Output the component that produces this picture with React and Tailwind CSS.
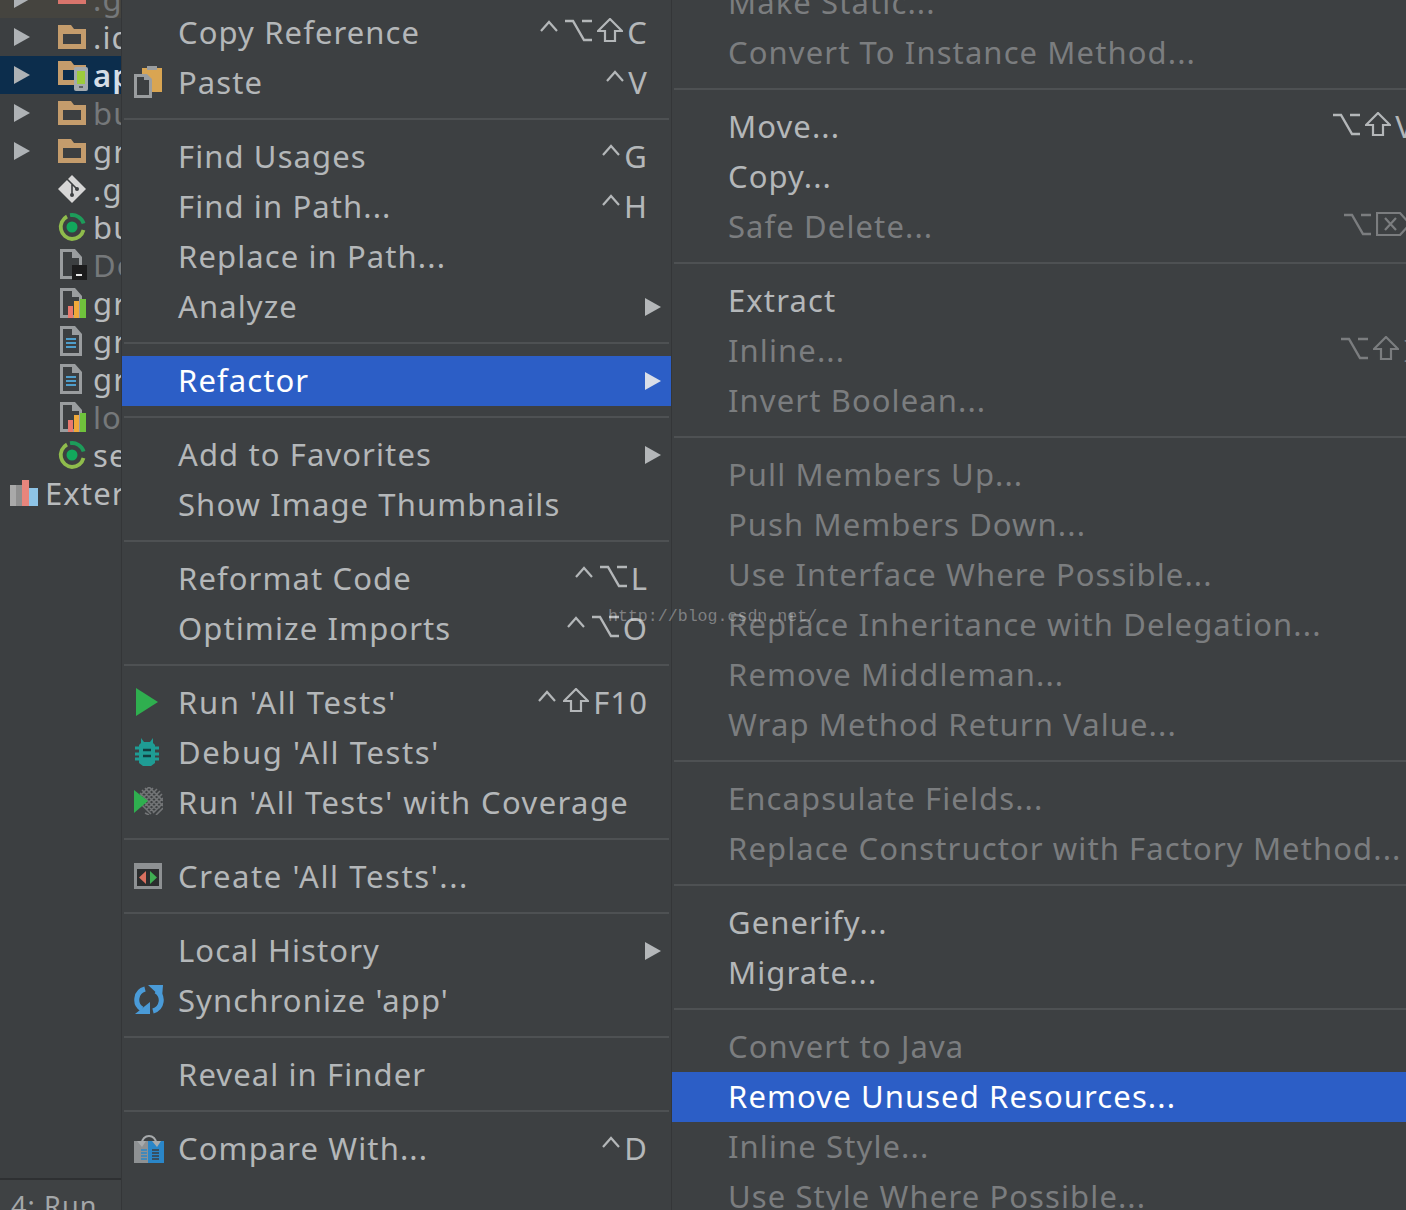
const Tri = ({ className = '' }) => (
  <svg width="16" height="18" viewBox="0 0 16 18" className={className}>
    <path d="M0 0L16 9L0 18z" fill="currentColor" />
  </svg>
);

const Folder = () => (
  <svg width="28" height="24" viewBox="0 0 28 24">
    <path fillRule="evenodd" fill="#c49c6c" d="M0 0h13l3 4h12v20H0zM5 9v10h18V9z" />
  </svg>
);

const AppFolder = () => (
  <svg width="30" height="30" viewBox="0 0 30 30" className="mt-[2px]">
    <path fillRule="evenodd" fill="#c49c6c" d="M0 0h13l3 4h12v20H0zM5 9v10h18V9z" />
    <rect x="16" y="6" width="14" height="24" rx="2" fill="#a3a9ad" />
    <rect x="19" y="10" width="8" height="13" fill="#9ccb3c" />
    <rect x="21" y="25" width="4" height="2" fill="#5b6064" />
  </svg>
);

const GitIcon = () => (
  <svg width="28" height="28" viewBox="0 0 28 28">
    <path d="M14 0L28 14L14 28L0 14z" fill="#d6d6d6" />
    <path d="M9 4l5 5v11M14 9l5 5" stroke="#3c3f41" strokeWidth="1.6" fill="none" />
    <circle cx="14" cy="20" r="2" fill="#3c3f41" />
    <circle cx="19" cy="14" r="2" fill="#3c3f41" />
  </svg>
);

const GradleIcon = () => (
  <svg width="28" height="28" viewBox="0 0 28 28" fill="none">
    <path d="M9 3.500A12 12 0 0 0 14 26A12 12 0 0 0 25.500 17" stroke="#8fbc4c" strokeWidth="3.800" />
    <path d="M12 2.200A12 12 0 0 1 25.600 10.500" stroke="#1d9c5a" strokeWidth="3.800" />
    <circle cx="14" cy="14" r="5.500" fill="#12a85c" />
  </svg>
);

const DocOutline = () => (
  <path fillRule="evenodd" fill="#9a9d9f" d="M0 0h15l7 8v22H0zM3 3v24h16V9h-7V3z" />
);

const DockerFile = () => (
  <svg width="28" height="32" viewBox="0 0 28 32" className="ml-[2px]">
    <DocOutline />
    <rect x="12" y="16" width="15" height="15" fill="#1c1c1d" />
    <rect x="16" y="25" width="6" height="2" fill="#e8e8e8" />
  </svg>
);

const ChartFile = () => (
  <svg width="26" height="30" viewBox="0 0 26 30" className="ml-[2px]">
    <DocOutline />
    <rect x="8" y="18" width="5" height="12" fill="#e8786e" />
    <rect x="14" y="13" width="5" height="17" fill="#f0a93a" />
    <rect x="20" y="11" width="6" height="19" fill="#6fc23c" />
  </svg>
);

const TextFile = () => (
  <svg width="22" height="30" viewBox="0 0 22 30" className="ml-[2px]">
    <DocOutline />
    <path d="M6 13h10M6 17h10M6 21h10" stroke="#4f9ecb" strokeWidth="2" />
  </svg>
);

const LibIcon = () => (
  <svg width="28" height="26" viewBox="0 0 28 26" className="shrink-0">
    <rect x="0" y="5" width="6" height="21" fill="#a9a9a9" />
    <rect x="6" y="5" width="6" height="21" fill="#8f8f8f" />
    <rect x="12" y="0" width="7" height="26" fill="#e8857c" />
    <rect x="19" y="8" width="9" height="18" fill="#8ec4e6" />
  </svg>
);

const PasteIcon = () => (
  <svg width="28" height="32" viewBox="0 0 28 32">
    <rect x="8" y="2" width="20" height="24" fill="#d9a552" />
    <rect x="13" y="0" width="10" height="4" fill="#9a9d9f" />
    <path fillRule="evenodd" fill="#9a9d9f" d="M0 8h13l5 5v19H0zM3 11v18h12V14h-5v-3z" />
    <path fill="#3c3f41" d="M3 11h7v3h5v15H3z" />
  </svg>
);

const PlayIcon = () => (
  <svg width="22" height="28" viewBox="0 0 22 28" className="ml-[2px]">
    <path d="M0 0L22 14L0 28z" fill="#2faf4f" />
  </svg>
);

const BugIcon = () => (
  <svg width="24" height="28" viewBox="0 0 24 28" className="ml-[1px]">
    <path d="M6 0l3 4h6l3-4v5l2 2v18l-4 3H8l-4-3V7l2-2z" fill="#1f9c94" />
    <path d="M0 10h24M0 16h24M0 21h24" stroke="#1f9c94" strokeWidth="3" />
    <path d="M8 12h8M8 18h8" stroke="#123f40" strokeWidth="2.400" />
  </svg>
);

const CoverageIcon = () => (
  <svg width="29" height="28" viewBox="0 0 29 28" className="mt-[-2px]">
    <path
      d="M6 9L15 0M6 14L19 1M8 17L23 2M11 19L26 4M13 22L28 7M16 24L29 11M19 26L29 16M22 28L29 21M15 0L29 14M11 1L29 19M8 3L26 21M6 6L23 23M6 11L20 25M8 18L17 27M11 26L15 28"
      stroke="#737577"
      strokeWidth="1.600"
    />
    <path d="M0 3L14 14L0 26z" fill="#2faf4f" />
  </svg>
);

const CreateIcon = () => (
  <svg width="28" height="26" viewBox="0 0 28 26">
    <rect x="0" y="0" width="28" height="26" fill="#8e9193" />
    <rect x="3" y="6" width="22" height="17" fill="#2b2d2e" />
    <path d="M12 8v13L5 14.500z" fill="#d9705f" />
    <path d="M16 8v13l7-6.500z" fill="#3fae52" />
  </svg>
);

const SyncIcon = () => (
  <svg width="30" height="30" viewBox="0 0 30 30" fill="none">
    <path d="M8 24A11 11 0 0 1 11 4" stroke="#4a9bd8" strokeWidth="5" />
    <path d="M22 6A11 11 0 0 1 19 26" stroke="#4a9bd8" strokeWidth="5" />
    <path d="M14 0h15l-1 13z" fill="#4a9bd8" />
    <path d="M1 29h15V17z" fill="#4a9bd8" />
  </svg>
);

const CompareIcon = () => (
  <svg width="30" height="30" viewBox="0 0 30 30">
    <rect x="0" y="8" width="14" height="22" fill="#8e9193" />
    <rect x="14" y="8" width="16" height="22" fill="#2a86c8" />
    <path d="M7 17h6M7 20h6M7 23h6M7 26h6" stroke="#2a86c8" strokeWidth="1.500" />
    <path d="M18 17h7M18 20h7M18 23h7M18 26h7" stroke="#3c3f41" strokeWidth="1.500" />
    <path d="M8 10A7 7 0 0 1 22 10" stroke="#a7aaac" strokeWidth="2" fill="none" />
    <path d="M3 8h9l-4 6zM18 8h9l-4 6z" fill="#a7aaac" />
  </svg>
);

// mac modifier keys, drawn because no installed font has these shapes
const KeyCtrl = () => (
  <svg width="18" height="24" viewBox="0 0 18 24" fill="none" stroke="currentColor" strokeWidth="2.200">
    <path d="M1 13L9 4L17 13" />
  </svg>
);

const KeyOpt = () => (
  <svg width="27" height="24" viewBox="0 0 27 24" fill="none" stroke="currentColor" strokeWidth="2.400">
    <path d="M0 3H8L19 22H27M17 3H27" />
  </svg>
);

const KeyShift = () => (
  <svg width="26" height="24" viewBox="0 0 26 24" fill="none" stroke="currentColor" strokeWidth="2.200">
    <path d="M13 1L25 13H18V23H8V13H1z" />
  </svg>
);

const KeyDel = () => (
  <svg width="35" height="24" viewBox="0 0 35 24" fill="none" stroke="currentColor" strokeWidth="2.200">
    <path d="M1 1H24L34 12L24 23H1zM9 6L20 18M20 6L9 18" />
  </svg>
);

const keyIcons = { c: KeyCtrl, o: KeyOpt, s: KeyShift, d: KeyDel };

const Keys = ({ mods = '', letter = '' }) => (
  <span className="mr-[13px] flex items-center gap-[5px] whitespace-nowrap">
    {mods.split('').map((m, i) => {
      const Icon = keyIcons[m];
      return (
        <span key={i} className={`mt-[-4px] flex ${m === 'c' && mods.length > 1 ? 'mr-[2px]' : ''}`}>
          <Icon />
        </span>
      );
    })}
    <span className="ml-[-1px]">{letter}</span>
  </span>
);

const treeRows = [
  { name: '.gitignore', icon: null, arrow: true, dim: true, top: true },
  { name: '.idea', icon: <Folder />, arrow: true },
  { name: 'app', icon: <AppFolder />, arrow: true, selected: true },
  { name: 'build', icon: <Folder />, arrow: true, dim: true },
  { name: 'gradle', icon: <Folder />, arrow: true },
  { name: '.gitignore', icon: <GitIcon /> },
  { name: 'build.gradle', icon: <GradleIcon /> },
  { name: 'Dockerfile', icon: <DockerFile />, dim: true },
  { name: 'gradle.properties', icon: <ChartFile /> },
  { name: 'gradlew', icon: <TextFile /> },
  { name: 'gradlew.bat', icon: <TextFile /> },
  { name: 'local.properties', icon: <ChartFile />, dim: true },
  { name: 'settings.gradle', icon: <GradleIcon /> },
];

const menuOne = [
  [
    { label: 'Copy Reference', mods: 'cos', letter: 'C' },
    { label: 'Paste', mods: 'c', letter: 'V', icon: <PasteIcon /> },
  ],
  [
    { label: 'Find Usages', mods: 'c', letter: 'G' },
    { label: 'Find in Path...', mods: 'c', letter: 'H' },
    { label: 'Replace in Path...' },
    { label: 'Analyze', sub: true },
  ],
  [{ label: 'Refactor', sub: true, active: true }],
  [
    { label: 'Add to Favorites', sub: true },
    { label: 'Show Image Thumbnails' },
  ],
  [
    { label: 'Reformat Code', mods: 'co', letter: 'L' },
    { label: 'Optimize Imports', mods: 'co', letter: 'O' },
  ],
  [
    { label: "Run 'All Tests'", mods: 'cs', letter: 'F10', icon: <PlayIcon />, track: 'tracking-[1.6px]' },
    { label: "Debug 'All Tests'", icon: <BugIcon />, track: 'tracking-[1.6px]' },
    { label: "Run 'All Tests' with Coverage", icon: <CoverageIcon />, track: 'tracking-[1.4px]' },
  ],
  [{ label: "Create 'All Tests'...", icon: <CreateIcon />, track: 'tracking-[1.6px]' }],
  [
    { label: 'Local History', sub: true },
    { label: "Synchronize 'app'", icon: <SyncIcon /> },
  ],
  [{ label: 'Reveal in Finder' }],
  [{ label: 'Compare With...', mods: 'c', letter: 'D', icon: <CompareIcon /> }],
];

const menuTwo = [
  [
    { label: 'Make Static...', off: true },
    { label: 'Convert To Instance Method...', off: true },
  ],
  [
    { label: 'Move...', mods: 'os', letter: 'V' },
    { label: 'Copy...' },
    { label: 'Safe Delete...', mods: 'od', off: true },
  ],
  [
    { label: 'Extract' },
    { label: 'Inline...', mods: 'os', letter: 'I', off: true },
    { label: 'Invert Boolean...', off: true },
  ],
  [
    { label: 'Pull Members Up...', off: true },
    { label: 'Push Members Down...', off: true },
    { label: 'Use Interface Where Possible...', off: true },
    { label: 'Replace Inheritance with Delegation...', off: true },
    { label: 'Remove Middleman...', off: true },
    { label: 'Wrap Method Return Value...', off: true },
  ],
  [
    { label: 'Encapsulate Fields...', off: true },
    { label: 'Replace Constructor with Factory Method...', off: true },
  ],
  [{ label: 'Generify...' }, { label: 'Migrate...' }],
  [
    { label: 'Convert to Java', off: true },
    { label: 'Remove Unused Resources...', active: true },
    { label: 'Inline Style...', off: true },
    { label: 'Use Style Where Possible...', off: true },
  ],
];

const TreeRow = ({ row }) => (
  <div className={`relative flex h-[38px] shrink-0 items-center ${row.selected ? 'bg-[#0c2d4c]' : ''} ${row.top ? 'bg-[#45443f]' : ''}`}>
    <div className="w-[58px] shrink-0 pl-[14px] text-[#aeb2b5]">{row.arrow && <Tri className="block" />}</div>
    <div className="flex w-[35px] shrink-0 items-center">
      {row.top ? <div className="mt-[-18px] h-[28px] w-[28px] border-[4px] border-[#d9756c]" /> : row.icon}
    </div>
    <span className={`whitespace-nowrap ${row.selected ? 'font-semibold text-[#d5dde6]' : row.dim ? 'text-[#75787a]' : 'text-[#b8bbbd]'}`}>
      {row.name}
    </span>
  </div>
);

const MenuRow = ({ item }) => {
  const tone = item.active ? 'bg-[#2c5ec6] text-white' : item.off ? 'text-[#7b7d7f]' : 'text-[#b4b7b9]';
  return (
    <div className={`flex h-[50px] shrink-0 items-center pb-[2px] pl-[9px] pr-[10px] ${tone}`}>
      <div className="flex w-[47px] shrink-0 items-center pl-[3px]">{item.icon}</div>
      <span className={`grow whitespace-nowrap ${item.track || ''}`}>{item.label}</span>
      {item.mods && <Keys mods={item.mods} letter={item.letter} />}
      {item.sub && <Tri className={`mt-[2px] ${item.active ? 'text-[#d9dee8]' : 'text-[#b4b7b9]'}`} />}
    </div>
  );
};

const Menu = ({ groups, className }) => (
  <div className={`flex shrink-0 flex-col border-l border-[#343638] bg-[#3d4042] ${className}`}>
    {groups.map((group, i) => (
      <div key={i} className="flex shrink-0 flex-col">
        {i > 0 && <div className="mx-[2px] mb-[12px] mt-[10px] h-[2px] shrink-0 bg-[#4e5153]" />}
        {group.map((item) => (
          <MenuRow key={item.label} item={item} />
        ))}
      </div>
    ))}
  </div>
);

export default function App() {
  return (
    <div className="relative flex h-[1210px] w-[1406px] overflow-hidden bg-[#3c3f41] font-['Noto_Sans',sans-serif] text-[31px] tracking-[1.1px]">
      <div className="flex w-[121px] shrink-0 flex-col overflow-hidden">
        <div className="mt-[-20px] flex shrink-0 flex-col">
          {treeRows.map((row, i) => (
            <TreeRow key={i} row={row} />
          ))}
          <div className="flex h-[38px] shrink-0 items-center gap-[7px] pl-[10px] text-[#b8bbbd]">
            <LibIcon />
            <span className="whitespace-nowrap">External Libraries</span>
          </div>
        </div>
        <div className="mt-auto h-[32px] shrink-0 overflow-hidden whitespace-nowrap border-t-2 border-[#2e3032] bg-[#3f4244] pl-[11px] text-[27px] leading-[52px] text-[#a4a7a9]">
          4: Run
        </div>
      </div>
      <Menu groups={menuOne} className="w-[550px] pt-[8px]" />
      <Menu groups={menuTwo} className="mt-[-22px] w-[767px]" />
      <div className="absolute left-[608px] top-[605px] whitespace-nowrap font-['Liberation_Mono',monospace] text-[16.600px] tracking-normal text-white/35">
        http://blog.csdn.net/
      </div>
    </div>
  );
}
